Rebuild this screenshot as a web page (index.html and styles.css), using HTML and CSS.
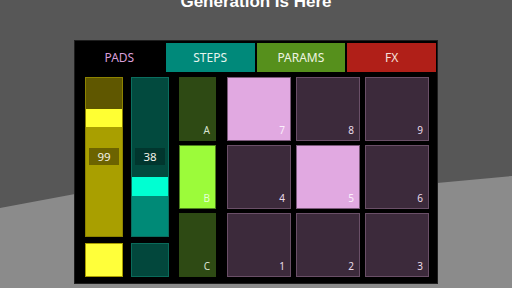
FILE: index.html
```html
<!DOCTYPE html>
<html lang="en">
<head>
  <meta charset="UTF-8">
  <meta name="viewport" content="width=device-width, initial-scale=1.0">
  <title>Generation Is Here</title>
  <link rel="stylesheet" href="styles.css">
</head>
<body>
  <div class="stage">
    <svg class="floor" width="512" height="288" viewBox="0 0 512 288">
      <polygon points="0,208 75,194 437,183 512,176 512,288 0,288" fill="#8b8b8b"/>
    </svg>

    <h1 class="title">Generation Is Here</h1>

    <div class="panel">
      <div class="tabs">
        <div class="tab tab-pads">PADS</div>
        <div class="tab tab-steps">STEPS</div>
        <div class="tab tab-params">PARAMS</div>
        <div class="tab tab-fx">FX</div>
      </div>

      <div class="panel-body">
        <div class="strip strip-yellow">
          <div class="slider">
            <div class="slider-top" style="height:31px"></div>
            <div class="slider-band"></div>
            <div class="slider-fill"></div>
            <span class="slider-value">99</span>
          </div>
          <div class="swatch"></div>
        </div>

        <div class="strip strip-teal">
          <div class="slider">
            <div class="slider-top" style="height:99px"></div>
            <div class="slider-band"></div>
            <div class="slider-fill"></div>
            <span class="slider-value">38</span>
          </div>
          <div class="swatch"></div>
        </div>

        <div class="banks">
          <div class="bank"><span>A</span></div>
          <div class="bank bank-on"><span>B</span></div>
          <div class="bank"><span>C</span></div>
        </div>

        <div class="pads">
          <div class="pad pad-on"><span>7</span></div>
          <div class="pad"><span>8</span></div>
          <div class="pad"><span>9</span></div>
          <div class="pad"><span>4</span></div>
          <div class="pad pad-on"><span>5</span></div>
          <div class="pad"><span>6</span></div>
          <div class="pad"><span>1</span></div>
          <div class="pad"><span>2</span></div>
          <div class="pad"><span>3</span></div>
        </div>
      </div>
    </div>
  </div>
</body>
</html>
```

FILE: styles.css
```css
body {
  margin: 0;
  font-family: "Noto Sans", "DejaVu Sans", sans-serif;
}
.stage {
  position: relative;
  width: 512px;
  height: 288px;
  overflow: hidden;
  background: #575757;
}
.floor {
  position: absolute;
  left: 0;
  top: 0;
}
.title {
  position: relative;
  margin: -7px 0 0;
  height: 17px;
  font-family: "Liberation Sans", Arial, sans-serif;
  font-size: 17px;
  line-height: 17px;
  font-weight: bold;
  color: #fff;
  text-align: center;
}
.panel {
  position: relative;
  margin: 31px 0 0 75px;
  width: 362px;
  height: 242px;
  background: #000;
  box-shadow: 0 0 0 1px #1e1e1e;
}

/* tabs */
.tabs {
  display: grid;
  grid-template-columns: repeat(4, 1fr);
  column-gap: 2px;
  padding: 2px 1px 0 0;
}
.tab {
  height: 29px;
  line-height: 29px;
  text-align: center;
  font-size: 12px;
}
.tab-pads { color: #d99ed9; }
.tab-steps { background: #00897a; color: #e6f4ee; }
.tab-params { background: #56901c; color: #eef4e0; }
.tab-fx { background: #b01f18; color: #f6e0da; }

/* body */
.panel-body {
  display: flex;
  padding: 5px 0 0 10px;
}
.strip {
  display: flex;
  flex-direction: column;
  width: 38px;
  margin-right: 8px;
}
.strip-teal { margin-right: 10px; }
.slider {
  position: relative;
  display: flex;
  flex-direction: column;
  height: 160px;
  box-sizing: border-box;
  border: 1px solid;
}
.slider-band { height: 18px; }
.slider-fill { flex: 1; }
.slider-value {
  position: absolute;
  top: 70px;
  left: 3px;
  right: 3px;
  height: 17px;
  line-height: 17px;
  text-align: center;
  font-size: 11.5px;
  color: #f2f2e8;
}
.swatch {
  margin-top: 6px;
  height: 34px;
  box-sizing: border-box;
  border: 1px solid;
}

.strip-yellow .slider { border-color: #8d8300; }
.strip-yellow .slider-top { background: #5f5700; }
.strip-yellow .slider-band { background: #ffff33; }
.strip-yellow .slider-fill { background: #a99f00; }
.strip-yellow .slider-value { background: #6c6300; }
.strip-yellow .swatch { background: #ffff3a; border-color: #a89c00; }

.strip-teal .slider { border-color: #0b6e5f; }
.strip-teal .slider-top { background: #024a3e; }
.strip-teal .slider-band { background: #00ffd2; height: 19px; }
.strip-teal .slider-fill { background: #008a77; }
.strip-teal .slider-value { background: #01362e; }
.strip-teal .swatch { background: #02473c; border-color: #0a6a5a; }

/* banks A B C */
.banks {
  display: grid;
  grid-template-rows: 64px 64px 64px;
  row-gap: 4px;
  width: 37px;
  margin-right: 11px;
}
.bank {
  display: flex;
  align-items: flex-end;
  justify-content: flex-end;
  box-sizing: border-box;
  padding: 0 5px 5px 0;
  background: #2e4a14;
  border: 1px solid #2e4a14;
  color: #d8e2d0;
  font-size: 10px;
  line-height: 10px;
}
.bank-on {
  background: #9cfb3a;
  border-color: #4d7e1e;
  color: #e4ffd4;
}

/* pads */
.pads {
  display: grid;
  grid-template-columns: repeat(3, 64px);
  grid-template-rows: repeat(3, 64px);
  column-gap: 5px;
  row-gap: 4px;
}
.pad {
  display: flex;
  align-items: flex-end;
  justify-content: flex-end;
  box-sizing: border-box;
  padding: 0 5px 5px 0;
  background: #3c2a3b;
  border: 1px solid #6a4f67;
  color: #eadcea;
  font-size: 10px;
  line-height: 10px;
}
.pad-on {
  background: #e1a9e1;
  border-color: #7b5a7a;
  color: #fbf0fb;
}
```
